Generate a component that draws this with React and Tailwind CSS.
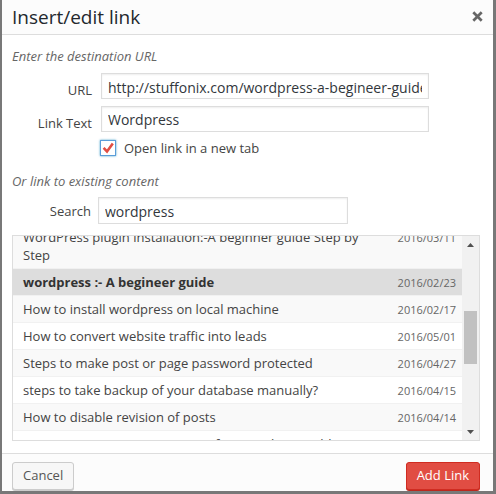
import React from "react";

const rows = [
  { t: "WordPress plugin installation:-A beginner guide Step by Step", d: "2016/03/11" },
  { t: "wordpress :- A begineer guide", d: "2016/02/23", sel: true },
  { t: "How to install wordpress on local machine", d: "2016/02/17" },
  { t: "How to convert website traffic into leads", d: "2016/05/01" },
  { t: "Steps to make post or page password protected", d: "2016/04/27" },
  { t: "steps to take backup of your database manually?", d: "2016/04/15" },
  { t: "How to disable revision of posts", d: "2016/04/14" },
  { t: "Best ways to increase security of your website or blog?", d: "2016/04/10" },
];

function Row({ r, i }) {
  const bg = r.sel ? "bg-[#dddddd]" : i % 2 === 0 ? "bg-[#f9f9f9]" : "bg-white";
  return (
    <li
      className={
        "flex items-start border-b border-[#f1f1f1] pt-[4px] pb-[4px] pl-[10px] pr-[6px] text-[13px] leading-[18px] " +
        bg
      }
    >
      <span className={"w-[80%] " + (r.sel ? "font-bold text-[#333]" : "text-[#444]")}>{r.t}</span>
      <span className="ml-auto mt-[2px] text-[11px] leading-[15px] text-[#666]">{r.d}</span>
    </li>
  );
}

export default function App() {
  return (
    <div className="w-[496px] h-[494px] flex flex-col bg-white border-l-2 border-r-[3px] border-b-[3px] border-[#787878] font-['Open_Sans',sans-serif] text-[#444]">
      {/* header */}
      <div className="h-[35px] shrink-0 flex items-center justify-between border-b border-[#dddddd] bg-[#fcfcfc] pl-[10px] pr-[10px]">
        <h1 className="text-[19px] font-normal text-[#23282d]">Insert/edit link</h1>
        <svg width="11" height="11" viewBox="0 0 11 11" className="mt-[-2px]">
          <path d="M1.3 1.3 L9.7 9.7 M9.7 1.3 L1.3 9.7" stroke="#666" strokeWidth="2.7" strokeLinecap="butt" />
        </svg>
      </div>

      {/* body */}
      <div className="pl-[10px] pr-[13px] shrink-0">
        <p className="mt-[12px] text-[13px] leading-[18px] italic text-[#666]">Enter the destination URL</p>

        <div className="mt-[8px] flex items-center">
          <span className="w-[80px] text-right text-[13px] leading-[18px] pt-[8px]">URL</span>
          <input
            readOnly
            defaultValue="http://stuffonix.com/wordpress-a-begineer-guide"
            className="ml-[9px] w-[328px] h-[26px] border border-[#dddddd] bg-white px-[6px] pt-[2px] text-[14px] text-[#32373c] shadow-[inset_0_1px_2px_rgba(0,0,0,0.07)] outline-none"
          />
        </div>

        <div className="mt-[7px] flex items-center">
          <span className="w-[80px] text-right text-[13px] leading-[18px] pt-[7px]">Link Text</span>
          <input
            readOnly
            defaultValue="Wordpress"
            className="ml-[9px] w-[328px] h-[26px] border border-[#dddddd] bg-white px-[6px] pt-[1px] text-[14px] text-[#32373c] shadow-[inset_0_1px_2px_rgba(0,0,0,0.07)] outline-none"
          />
        </div>

        <div className="mt-[8px] ml-[88px] flex items-center h-[16px]">
          <span className="w-[16px] h-[16px] border border-[#5b9dd9] bg-white shadow-[0_0_2px_rgba(30,140,190,0.8)] flex items-center justify-center">
            <svg width="14" height="14" viewBox="0 0 14 14">
              <path d="M2.6 6.8 L6 10.4 L11.8 2.4" fill="none" stroke="#e14d43" strokeWidth="2.6" strokeLinejoin="miter" />
            </svg>
          </span>
          <span className="ml-[8px] text-[13px] leading-[18px]">Open link in a new tab</span>
        </div>

        <p className="mt-[16px] text-[13px] leading-[18px] italic text-[#666]">Or link to existing content</p>

        <div className="mt-[7px] flex items-center">
          <span className="w-[79px] text-right text-[13px] leading-[18px]">Search</span>
          <input
            readOnly
            defaultValue="wordpress"
            className="ml-[7px] w-[250px] h-[27px] border border-[#dddddd] bg-white px-[6px] pt-[1px] text-[14px] text-[#32373c] shadow-[inset_0_1px_2px_rgba(0,0,0,0.07)] outline-none"
          />
        </div>

        {/* results */}
        <div className="mt-[11px] h-[206px] border border-[#dddddd] flex overflow-hidden bg-white">
          <div className="flex-1 overflow-hidden">
            <ul className="mt-[-12px]">
              {rows.map((r, i) => (
                <Row key={i} r={r} i={i} />
              ))}
            </ul>
          </div>
          <div className="w-[17px] shrink-0 bg-[#f1f1f1] flex flex-col">
            <div className="h-[17px] flex items-center justify-center">
              <svg width="7" height="4" viewBox="0 0 7 4">
                <path d="M0 4 L3.5 0 L7 4 Z" fill="#505050" />
              </svg>
            </div>
            <div className="h-[58px]" />
            <div className="h-[53px] mx-[2px] bg-[#c1c1c1]" />
            <div className="flex-1" />
            <div className="h-[17px] flex items-center justify-center">
              <svg width="7" height="4" viewBox="0 0 7 4">
                <path d="M0 0 L7 0 L3.5 4 Z" fill="#505050" />
              </svg>
            </div>
          </div>
        </div>
      </div>

      {/* footer */}
      <div className="mt-[12px] flex-1 border-t border-[#dddddd] bg-[#fcfcfc] pt-[8px] pl-[10px] pr-[13px] flex items-start justify-between">
        <button className="h-[28px] px-[10px] border border-[#cccccc] bg-[#f7f7f7] rounded-[3px] text-[13px] text-[#555] shadow-[0_1px_0_#cccccc]">
          Cancel
        </button>
        <button className="h-[28px] px-[10px] border border-[#d02c21] bg-[#e14d43] rounded-[3px] text-[13px] text-white shadow-[0_1px_0_#ba281e]">
          Add Link
        </button>
      </div>
    </div>
  );
}
